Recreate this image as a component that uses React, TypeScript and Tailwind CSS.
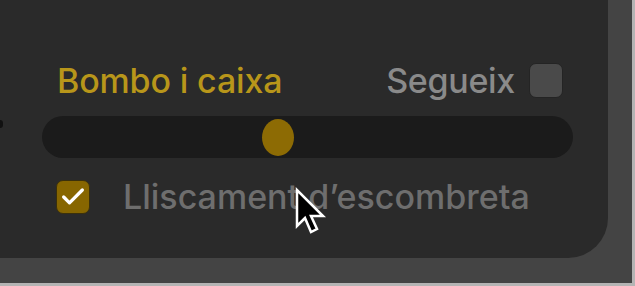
import { Check } from "lucide-react";

function Cursor() {
  return (
    <svg
      className="absolute left-[292px] top-[186px]"
      width="40"
      height="52"
      viewBox="0 0 40 52"
    >
      <path
        d="M5 4 L5 40 L13 32 L19 46 L25 43 L19 30 L31 30 Z"
        fill="#000"
        stroke="#fff"
        strokeWidth="2.5"
        strokeLinejoin="miter"
      />
    </svg>
  );
}

export default function App() {
  return (
    <div
      className="relative w-[635px] h-[286px] bg-[#444444] border-r-[3px] border-b-[3px] border-[#b4b4b4] overflow-hidden"
      style={{ fontFamily: "Inter, 'Noto Sans', sans-serif" }}
    >
      <div className="w-[608px] h-[258px] bg-[#2a2a2a] rounded-br-[40px] pl-[42px] pr-[35px] pt-[63px] flex flex-col">
        <div className="h-[35px] flex items-center justify-between pl-[15px] pr-[10px]">
          <span className="text-[34px] leading-none font-medium text-[#b8961a] tracking-[-0.15px]">
            Bombo i caixa
          </span>
          <div className="flex items-center gap-[14px]">
            <span className="text-[34px] leading-none font-medium text-[#8a8a8a] tracking-[-0.3px]">
              Segueix
            </span>
            <div className="w-[34px] h-[35px] rounded-[7px] bg-[#4a4a4a] border border-[#242424]" />
          </div>
        </div>
        <div className="mt-[18px] h-[42px] rounded-full bg-[#1b1b1b] flex items-center pl-[220px]">
          <div className="w-[32px] h-[37px] rounded-[50%] bg-[#8d6b04]" />
        </div>
        <div className="mt-[22px] h-[34px] flex items-center pl-[14px] gap-[33px]">
          <div className="w-[34px] h-[34px] rounded-[7px] bg-[#876600] border border-[#3a300c] flex items-center justify-center">
            <Check className="w-[28px] h-[28px] text-white" strokeWidth={2.8} />
          </div>
          <span className="text-[34px] leading-none font-medium text-[#6e6e6e] tracking-[0px]">
            Lliscament d’escombreta
          </span>
        </div>
      </div>
      <div className="absolute left-0 top-[120px] w-[3px] h-[8px] rounded-r bg-[#111]" />
      <Cursor />
    </div>
  );
}
